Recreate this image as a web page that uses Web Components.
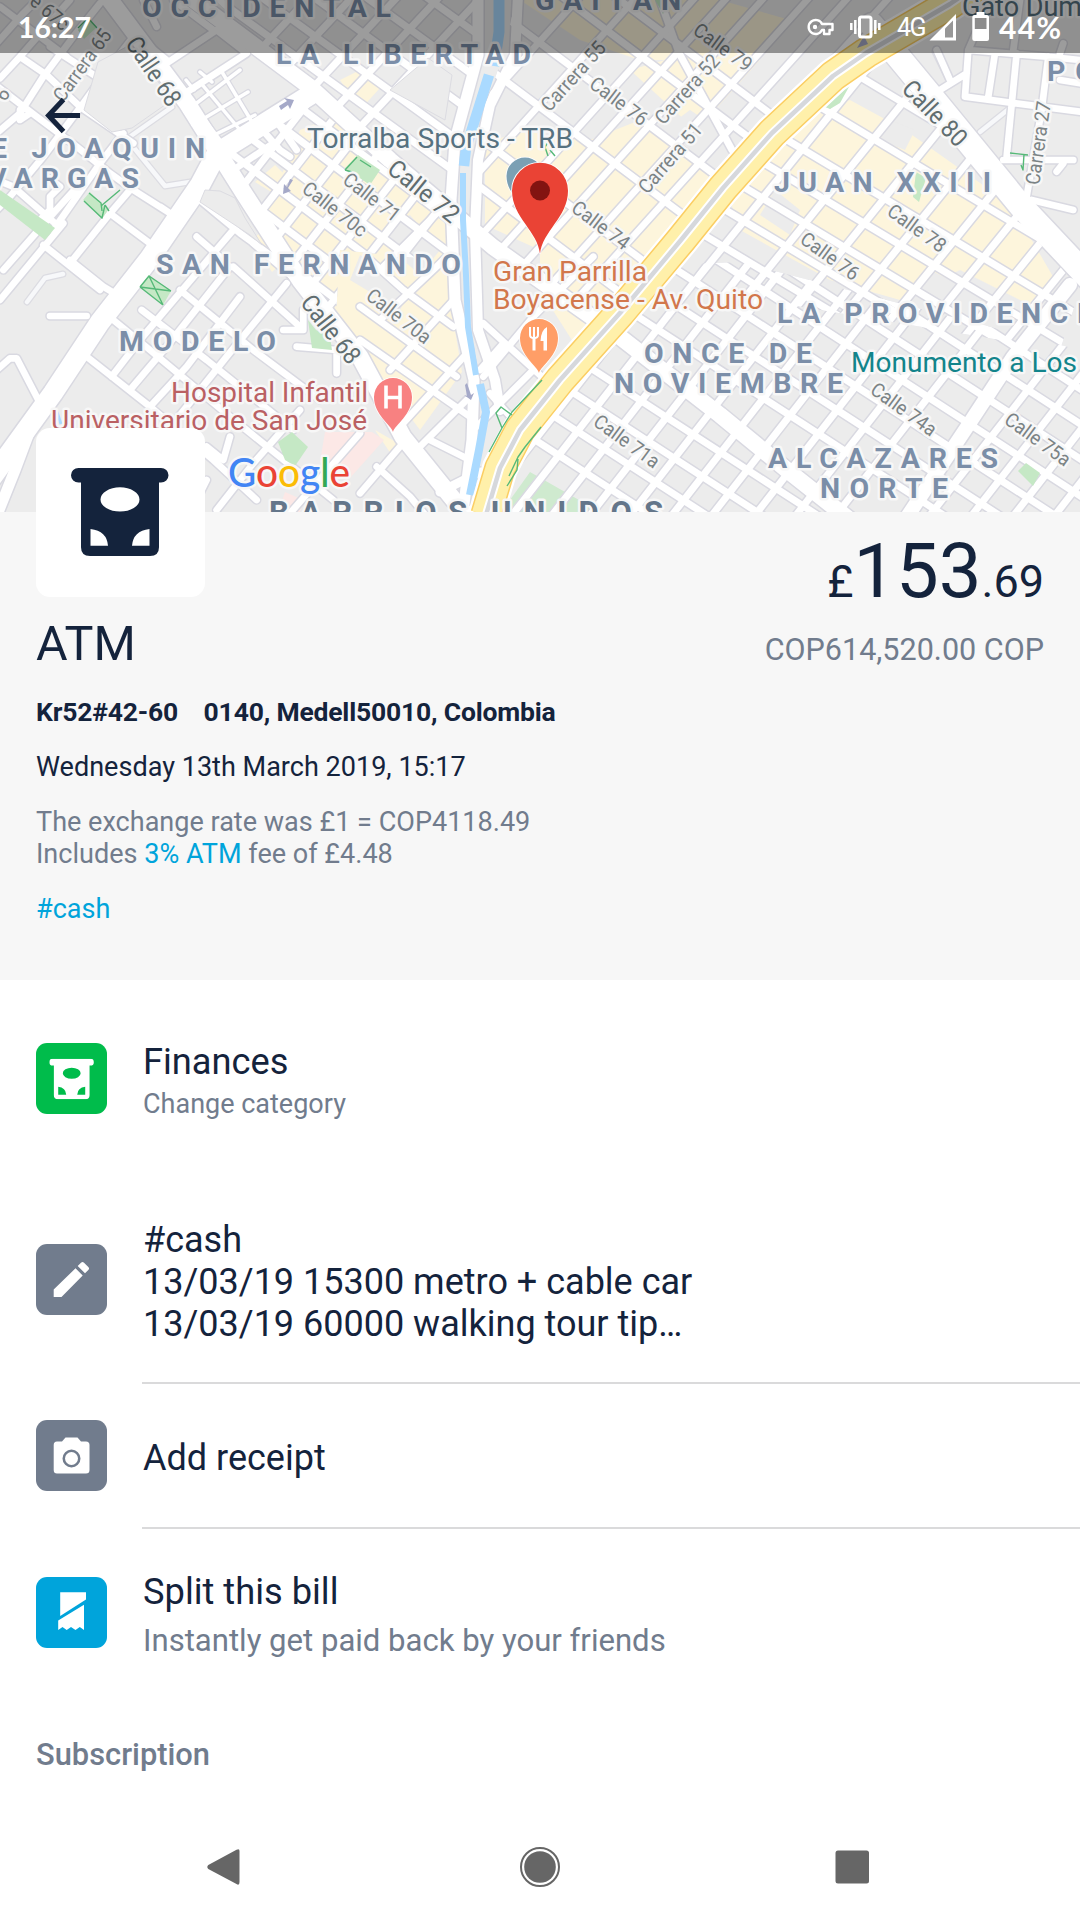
<!DOCTYPE html>
<html lang="en">
<head>
<meta charset="utf-8">
<title>Transaction</title>
<style>
html,body{margin:0;padding:0;background:#fff}
body{width:1080px;height:1920px;overflow:hidden;font-family:Roboto,"Liberation Sans",sans-serif;color:#14233c}
</style>
</head>
<body>
<transaction-screen></transaction-screen>
<script>
const define=(name,html,init)=>customElements.define(name,class extends HTMLElement{
  constructor(){super();this.attachShadow({mode:'open'}).innerHTML=html;}
  connectedCallback(){if(init&&!this.ready){this.ready=true;init(this);}}
});

/* ---------- city map ---------- */
const BLUE='#7b8ea8';
// Each sheet: x origin, y origin, streets traced at three times map scale.
const sheets=[
 [0,0,['M-10,130 L70,40 L110,0','M-10,400 L60,340 L130,230 L220,110 L300,10','M0,235 L60,170 L130,90 L210,0','M-20,640 L30,590 L130,470 L250,310 L330,200 L400,110','M160,690 L300,490 L370,400','M60,170 L140,225 L240,320 L400,430','M-20,250 L110,350 L230,440 L330,520 L400,570 L510,640','M150,140 L320,250','M0,20 L120,110 L200,170','M540,290 L740,160','M500,190 L650,90 L740,160','M-10,540 L40,560 L165,670','M120,660 L150,630 L150,590 L180,560 L140,530','M130,735 L300,870','M10,810 L160,640 L250,540','M210,790 L330,640 L390,570','M330,640 L450,730','M600,600 L720,700 L900,830','M590,710 L670,780','M770,370 L840,450 L870,470','M700,510 L820,430','M820,350 L890,450','M400,100 L500,180','M430,0 L470,80','M640,90 L520,0','M60,330 L60,360 L90,340','M510,640 L480,620','M640,760 L700,690']],
 [0,260,['M0,120 L190,-110','M210,0 L310,80 L360,110','M150,168 L260,168','M260,290 L450,440 L640,600 L770,720','M-10,330 L30,295 L50,295 L120,430','M335,350 L420,240 L640,-20','M390,390 L500,260 L690,20','M450,440 L560,320 L720,110','M520,490 L680,290 L860,70','M340,180 L450,270 L690,470 L1000,720','M425,150 L620,300 L880,510','M540,90 L760,270 L960,420','M850,210 L910,210 L910,150','M890,260 L1010,270 L1010,340','M620,560 L670,600 L690,530','M620,660 L600,700','M650,750 L760,610 L900,450','M870,760 L1080,520','M700,20 L900,200','M760,-50 L900,70']],
 [720,0,['M745,150 L735,290 L1080,335','M810,0 L745,150 L980,170 L1080,180','M825,160 L805,290','M890,160 L860,470','M985,170 L965,330 L920,590','M850,480 L1060,480','M935,600 L1060,630','M660,270 L740,220','M650,150 L690,240','M1020,240 L1080,250','M1010,515 L1030,490','M900,0 L880,150','M1030,130 L1020,160']],
 [360,260,['M30,0 L130,90 L280,200','M0,140 L290,350','M0,240 L330,470','M70,20 L270,-180','M60,180 L230,20 L270,-20','M90,330 L290,110','M120,500 L330,270','M180,560 L320,420','M210,540 L330,600','M50,620 L150,710 L200,770','M0,700 L120,560','M370,190 L545,350','M370,350 L520,170 L700,-10','M360,330 L430,250','M390,400 L460,480','M350,500 L450,400 L530,320']]
];
// A street family: angle, then where each street crosses the line x=at or y=at.
const fam=(a,axis,at,list,w=7)=>[a,w,list.map(v=>axis==='y'?[v,at]:[at,v])];
const grids=[
 ['300,95 395,170 455,225 455,262 340,250 335,329 290,275 250,205 225,155',[fam(37,'x',330,[130,163,198,228,262,295]),fam(-52,'y',200,[232,270,306,342,378,412,446])]],
 ['215,0 478,0 478,60 452,150 450,205 390,160 310,90',[fam(36,'x',400,[-60,-22,22,60,98,132]),fam(-47,'y',80,[232,275,320,362,404])]],
 ['515,0 930,0 860,45 800,95 750,150 675,259 610,330 493,247 478,220 480,120 505,50',[fam(37,'x',593,[-20,20,83,147,223,272]),fam(-48,'y',130,[460,517,576,608,645,690,729,770],6.5)]],
 ['880,55 1020,220 1080,290 1060,350 700,290 690,240 715,205 790,125',[fam(31,'x',887,[93,147,200,237,273,307,345]),fam(-51,'y',200,[650,705,761,824,883,937,987,1030,1075,1120])]],
 ['665,265 740,262 1080,350 1080,512 485,512 505,470 540,420 620,325',[fam(33,'x',720,[155,190,225,262,298,334,370,452,488,524,560]),fam(-52,'y',400,[566,602,642,680,720,762,802,845,886,926,1020,1062,1104,1145])]]
];
const wide=[
 ['M95,-20 L187,103 L245,195 L300,280 L360,357 L403,437 L470,520',17],
 ['M180,-10 L310,87 L390,160 L493,247 L620,337 L720,415 L787,470 L850,520',16],
 ['M310,95 L217,153 L200,185 L150,258 L100,322 L53,393 L-10,480',20],
 ['M30,430 L15,470 L-5,520',11],
 ['M145,275 L190,200',7],
 ['M478,0 L478,55 L455,140 L451,200 L455,300 L474,380 L472,440 L462,520',11],
 ['M518,-5 L515,55 L490,105 L478,160 L475,230 L478,330 L495,380 L500,410',10],
 ['M872,25 L930,95 L1020,205 L1100,290',24],
 ['M1070,285 L1013,357 L967,427 L905,520',14],
 ['M440,492 L480,472',9],
 ['M660,0 L679,53 L732,150',7]
];
const yellow=['300,130 350,110 395,165 450,230 450,300 462,372 420,430 390,390 340,320 290,250 265,215','232,220 240,212 252,228 240,235','250,240 262,232 280,265 272,272','255,182 275,165 290,180 278,196','340,80 360,70 380,88 360,110','520,0 640,0 720,0 790,20 740,70 700,60 640,60 580,40','630,70 700,50 760,60 715,110 690,125','485,145 520,130 590,140 640,120 720,175 660,260 610,320 575,345 540,290 540,250 485,225','820,110 850,100 905,130 990,190 1020,220 1055,280 1030,305 960,270 900,300 830,280 740,230 730,200 790,140','375,430 401,445 395,460'];
const gray=['690,110 720,130 690,150 670,125','525,120 545,105 565,120 550,140','775,190 800,210 790,235 760,215','890,120 915,130 905,150 880,140','360,255 410,290 400,310 350,280','930,270 960,285 940,305 915,285','375,235 410,215 440,250 420,275'];
const green=['M0,190 L55,228 45,240 0,205z','M83,200 L90,192 108,210 102,219z','M140,287 L149,275 171,291 163,305z','M278,442 L292,432 308,447 295,466 285,460z','M345,168 L358,155 380,170 370,185z','M825,107 L850,85 840,103 830,109z','M916,172 L926,178 919,202 913,197z','M1018,471 L1026,463 1040,473 1033,486z','M655,0 L663,14 670,0z','M78,30 L88,18 96,28 84,39z','M308,320 L316,330 330,337 332,350 312,348z'];
const area=[['OCCIDENTAL',142,17,249],['LA LIBERTAD',276,64,255],['GAITAN',535,10,146],['PO',1047,81,48],['E JOAQUIN',-9,158,214],['VARGAS',-12,188,151],['SAN FERNANDO',156,274,305],['MODELO',119,351,157],['JUAN XXIII',774,192,217],['LA PROVIDENCI',777,323,308],['ONCE DE',644,363,168],['NOVIEMBRE',614,393,229],['ALCAZARES',768,468,230],['NORTE',820,498,128]];
const poi=[['Torralba Sports - TRB',307,148,266,'#567180'],['Gran Parrilla',493,281,154,'#d2774c'],['Boyacense - Av. Quito',493,309,270,'#d2774c'],['Hospital Infantil',171,402,197,'#ba6063'],['Universitario de San José',51,429.5,316,'#ba6063'],['Monumento a Los',851,372,226,'#12848b'],['Gato Dum',962,16,120,'#55707e']];
const roads=[['Calle 68',154,71,56,78,25],['Carrera 65',82,65,-54,84,20],['e 67c',50,12,40,44,20],['6',2,94,-55,11,20],['Calle 70c',335,209,38,76,20],['Calle 71',372,197,38,66,20],['Calle 72',424,191,39,84,25],['Calle 70a',399,316,38,76,20],['Calle 68',331,329,52,80,25],['Carrera 55',573,76,-48,86,20],['Calle 76',619,101,37,67,20],['Carrera 52',687,89,-48,86,20],['Carrera 51',670,158,-49,86,20],['Calle 74',601,225,37,67,20],['Calle 79',723,47,36,67,20],['Calle 80',935,113,46,81,25],['Carrera 27',1038,143,-82,84,20],['Calle 78',917,228,36,67,20],['Calle 76',830,256,36,67,20],['Calle 71a',627,441,36,76,20],['Calle 74a',904,409,36,76,20],['Calle 75a',1038,439,36,76,20]];

function mapSvg(){
  const small=(c)=>sheets.map(([x,y,p])=>`<g transform="translate(${x} ${y}) scale(.3333)"><path d="${p.join(' ')}" stroke-width="${c?29:20}"/></g>`).join('');
  const grid=(c)=>grids.map(([,fs],i)=>`<g clip-path="url(#g${i})">`+fs.map(([a,w,pts])=>{
    const r=a*Math.PI/180,dx=Math.cos(r)*700,dy=Math.sin(r)*700;
    return `<path stroke-width="${w+(c?3:0)}" d="${pts.map(([x,y])=>`M${(x-dx).toFixed(1)},${(y-dy).toFixed(1)} L${(x+dx).toFixed(1)},${(y+dy).toFixed(1)}`).join(' ')}"/>`;}).join('')+'</g>').join('');
  const big=(c)=>wide.map(([d,w])=>`<path d="${d}" stroke-width="${w+(c?3:0)}"/>`).join('');
  const hw='M985,-20 L950,4 L866,53 L833,76 L772,133 L723,188 L681,240 L620,313 L560,380 L520,430 L500,468 L486,515';
  const faint='M128,138 L172,107 M126,138 L165,186 L190,182 M27,302 L45,278 63,274 M935,52 L950,82 M980,132 L1010,108';
  const lot='M190,100 L220,140 M200,82 L240,130 M222,72 L252,122 M185,112 L240,70 M193,125 L248,92 M208,138 L255,115 M186,80 L194,90 M200,72 L212,82';
  const pin=(x,y,r,t,f)=>`<path d="M${x},${t} C${x-2},${y+r*1.45} ${x-r},${y+r*.95} ${x-r},${y} A${r},${r} 0 0 1 ${x+r},${y} C${x+r},${y+r*.95} ${x+2},${y+r*1.45} ${x},${t}z" fill="${f}" stroke="#fff" stroke-width="1.6" paint-order="stroke"/>`;
  return `<svg viewBox="0 0 1080 512" width="1080" height="512" fill="none">
<defs>${grids.map(([p],i)=>`<clipPath id="g${i}"><polygon points="${p}"/></clipPath>`).join('')}</defs>
<rect width="1080" height="512" fill="#ececec"/>
<g fill="#fdf5dc">${yellow.map(p=>`<polygon points="${p}"/>`).join('')}</g>
<g fill="#ececec">${gray.map(p=>`<polygon points="${p}"/>`).join('')}</g>
<path fill="#fce8e6" d="M325,432 L372,432 384,440 350,478 320,462z M285,492 L303,500 300,512 278,512z M295,106 L305,104 302,113z"/>
<path fill="#cfeacf" d="M505,507 L530,472 600,512 505,512z"/>
<path stroke="#dcdce2" stroke-width="7" stroke-linecap="round" stroke-linejoin="round" d="${faint}"/>
<path stroke="#f7f8fa" stroke-width="4.500" stroke-linecap="round" stroke-linejoin="round" d="${faint}"/>
<g stroke="#d9d9e1" stroke-linecap="round" stroke-linejoin="round">${small(1)}${grid(1)}${big(1)}<path stroke-width="6" d="${lot}"/></g>
<g stroke="#fff" stroke-linecap="round" stroke-linejoin="round">${small(0)}${grid(0)}${big(0)}<path stroke-width="3.500" d="${lot}"/></g>
<path fill="#ececec" stroke="#dcdce2" d="M205,190 L220,191 235,198 245,218 262,245 250,235 200,202z M390,90 L428,58 452,75 445,120z M98,62 L130,45 172,100 132,128 112,132 84,110z"/>
<g fill="#c5e8c5">${green.map(p=>`<path d="${p}"/>`).join('')}</g>
<path stroke="#aadaff" stroke-width="11" d="M499,-5 V32 L494,66"/><path stroke="#aadaff" stroke-width="10.500" d="M489,75 L477,113 L466,148 L464,166"/><path stroke="#aadaff" stroke-width="6" d="M463,173 V220 L466,275 L468,327 L476,375"/><path stroke="#aadaff" stroke-width="8" d="M480,384 L486,412 L479,450 L470,495"/><path stroke="#aadaff" stroke-width="3" d="M57,412 L61,424"/>
<g stroke-linejoin="round"><path d="${hw}" stroke="#fff" stroke-width="36"/><path d="${hw}" stroke="#fbce63" stroke-width="31.500"/><path d="${hw}" stroke="#fff0aa" stroke-width="28.500"/><path d="${hw}" stroke="#fff" stroke-width="8.500"/><path d="${hw}" stroke="#d6d8dc" stroke-width="4.500"/></g>
<g stroke="#56b978" stroke-width="1.400" stroke-linejoin="round"><path d="M84,201 L102,218 105,205 M89,193 L101,203 102,211 M101,206 L120,190 M105,205 L109,211 M140,287 L149,276 171,291 M140,287 L163,305 M149,276 L163,305 M140,287 L171,291 M345,170 L357,157 M345,170 L352,172 M360,160 L371,167 M542,380 L512,412 502,428 489,452 M502,428 L496,413 501,407 512,415 M541,427 L525,447 518,457 509,476 M518,459 L517,470 507,486 M1010,153 L1028,155 M1024,154 L1023,170 L1021,165 M88,18 L78,28 M88,18 L97,28 M552,136 L545,147 548,156 M550,150 L555,156"/></g>
<g fill="#a5a9c8"><path d="M279,106 L287,101 284,98 294,100 290,109 288,105 281,110z M293,180 L288,188 291,191 283,194 284,184 287,187 290,179z M467,383 L471,395 474,393 471,400 464,395 467,396 465,385z"/><path d="M857,48 L864,36 868,44z"/></g>
${pin(525,176,18.5,206,'#7ba0b4')}
<g font-family="Roboto,sans-serif" paint-order="stroke" stroke="#f7f7f7" stroke-width="5" stroke-linejoin="round">
${roads.map(([t,x,y,a,l,s])=>`<text transform="translate(${x} ${y}) rotate(${a})" text-anchor="middle" y="${s*.355}" textLength="${l}" lengthAdjust="spacingAndGlyphs" font-size="${s}" fill="${s>22?'#606d70':'#7b8385'}">${t}</text>`).join('')}
<g font-size="28.500" font-weight="700" fill="${BLUE}">${area.map(([t,x,y,l])=>`<text x="${x}" y="${y}" textLength="${l}">${t}</text>`).join('')}</g>
<g font-size="31" font-weight="700" fill="#64768a"><text x="269" y="523" textLength="198">BARRIOS</text><text x="491" y="523" textLength="172">UNIDOS</text></g>
<g font-size="28">${poi.map(([t,x,y,l,c])=>`<text x="${x}" y="${y}" textLength="${l}" lengthAdjust="spacingAndGlyphs" fill="${c}">${t}</text>`).join('')}</g>
<text x="228" y="487" textLength="122" lengthAdjust="spacingAndGlyphs" font-size="41" font-family="Lato,sans-serif" font-weight="500"><tspan fill="#4285f4">G</tspan><tspan fill="#ea4335">o</tspan><tspan fill="#fbbc05">o</tspan><tspan fill="#4285f4">g</tspan><tspan fill="#34a853">l</tspan><tspan fill="#ea4335">e</tspan></text></g>
${pin(539,338,19,373,'#ff9e67')}
<path stroke="#fff" stroke-width="2" d="M530,327 V335 Q530,338 534,338 Q538,338 538,335 V327 M534,327 V350"/><path fill="#fff" d="M532.500,337 H535.500 V350.500 H532.500z M547,327 V350.500 H543.500 V341 H540.500 Q541,330 547,327z"/>
${pin(393,397,19,432,'#f88181')}
<path stroke="#fff" stroke-width="3.600" d="M386,385.500 V408.500 M400,385.500 V408.500 M386,397.500 H400"/>
${pin(540,190.700,28,254,'#ea4335')}<circle cx="540" cy="190.500" r="10" fill="#821411"/>
</svg>`;
}
customElements.define('city-map',class extends HTMLElement{
  constructor(){super();this.attachShadow({mode:'open'}).innerHTML=`<style>:host{display:block;width:1080px;height:512px;overflow:hidden}svg{display:block}</style>${mapSvg()}`;}
});

/* ---------- system chrome ---------- */
define('status-bar',`<style>
:host{position:absolute;inset:0 0 auto 0;height:53px;background:rgba(0,0,0,.39);color:#fff;display:flex;justify-content:space-between;align-items:center;box-sizing:border-box;padding:0 18px;font-family:Lato,sans-serif;font-weight:700;font-size:28.500px;line-height:53px}
div{display:flex;align-items:center}svg{display:block}
.t{letter-spacing:-.1px;padding-top:2px}.n{font:400 25px/53px Roboto,sans-serif;margin-left:16px;width:29px;letter-spacing:-1.500px;padding-top:1px}
.p{margin-left:9px;font-size:30px;letter-spacing:1.300px;width:63px;padding-top:2px}
</style><span class="t">16:27</span><div>
<svg width="28" height="53" viewBox="807 0 28 53" fill="none" stroke="#fff" stroke-width="2.400"><path d="M822,24 H832.500 V30 H829.500 V34 H824 V30 H822 A7,7 0 1 1 822,24z" stroke-linejoin="round"/><circle cx="815" cy="27" r="2.200" fill="#fff" stroke="none"/></svg>
<svg style="margin-left:15px" width="31" height="53" viewBox="850 0 31 53" fill="none" stroke="#fff"><rect x="859.500" y="17" width="11.500" height="20" rx="2" stroke-width="3"/><path stroke-width="2.500" d="M851.300,23 V30 M855.300,20 V34 M875.300,20 V34 M879.300,23 V30"/></svg>
<span class="n">4G</span>
<svg style="margin-left:3px" width="27" height="53" viewBox="929 0 27 53"><path d="M929.500,40.500 L956,14 V40.500z" fill="#fff"/><path d="M945,28.500 L953,20.500 V37.500 H945z" fill="#979797"/></svg>
<svg style="margin-left:16px" width="18" height="53" viewBox="972 0 18 53"><path d="M976.500,12 H984.500 V15 H987 Q989,15 989,17 V39 Q989,41 987,41 H974.500 Q972.300,41 972.300,39 V17 Q972.300,15 974.500,15 H976.500z" fill="#fff"/><path d="M974.800,18 H986.500 V29 H974.800z" fill="#8c8c8c"/></svg>
<span class="p">44%</span></div>`);
define('back-arrow',`<style>:host{position:absolute;left:44px;top:96px}svg{display:block}</style><svg width="38" height="39" fill="none" stroke="#14233c" stroke-width="5"><path d="M36,19.500 H5 M19.500,3.500 L4.500,19.500 L19.500,35.500"/></svg>`);
define('nav-bar',`<style>:host{display:flex;justify-content:center;align-items:center;height:108px}svg{display:block}</style>
<svg width="1080" height="108" fill="#666"><path d="M208.300,53 L236.500,37.800 Q239.500,36 239.500,39 V70 Q239.500,74 236.500,72 L208.300,57 Q206.300,55 208.300,53z"/><circle cx="540" cy="55" r="15.800"/><circle cx="540" cy="55" r="19" fill="none" stroke="#666" stroke-width="2"/><rect x="835.500" y="38.500" width="33.500" height="33" rx="2.500"/></svg>`);

/* ---------- icons ---------- */
const note=`<path fill-rule="evenodd" d="M7.500,0 H90 A7.500,7.500 0 0 1 90,15 H88 V82 Q88,91 79,91 H19 Q10,91 10,82 V15 H7.500 A7.500,7.500 0 0 1 7.500,0z M49,20 A19.500,12.500 0 1 0 49,45 A19.500,12.500 0 1 0 49,20z M19.500,63 V80.500 H37 Q36,65 19.500,63z M78.500,63 V80.500 H61 Q62,65 78.500,63z"/>`;
const icons={
 note:`<svg x="13.300" y="15.800" width="44.600" height="40.500" viewBox="0 0 97.500 91" preserveAspectRatio="none">${note}</svg>`,
 pencil:`<path d="M17.700,45.500 L39.500,24.300 L46.700,31.500 L25.500,53 H17.700z M41.700,22 L45,18.800 Q46.500,17.300 48,18.800 L52.300,23 Q53.800,24.500 52.300,26 L49,29.300z"/>`,
 camera:`<path fill-rule="evenodd" d="M29.500,17.500 H41.500 L45,21.500 H50 Q53.500,21.500 53.500,25 V50 Q53.500,53.500 50,53.500 H21 Q17.700,53.500 17.700,50 V25 Q17.700,21.500 21,21.500 H26z M35.500,29.500 A9,9 0 1 0 35.500,47.500 A9,9 0 1 0 35.500,29.500z"/><circle cx="35.500" cy="38.500" r="6.500"/>`,
 split:`<path d="M24.200,15.300 H50 V22.500 L24.200,39z M48,27.800 V53 L43.800,50 L39.500,53 L35,50 L30.700,53 L26.500,50 L22.200,53 V43.500z"/>`
};
define('app-icon',`<style>:host{display:block;flex:none;width:71px;height:71px;border-radius:11px;background:var(--tile,#717c8d)}svg{display:block}</style><span></span>`,
 e=>{e.shadowRoot.querySelector('span').innerHTML=`<svg width="71" height="71" fill="#fff">${icons[e.getAttribute('name')]}</svg>`;});
define('merchant-logo',`<style>:host{display:flex;align-items:center;justify-content:center;box-sizing:border-box;width:169px;height:169px;padding:0 1px 1px 0;border-radius:14px;background:#fff}svg{display:block}</style>
<svg width="97.500" height="88" viewBox="0 0 97.500 91" preserveAspectRatio="none" fill="#14233c">${note}</svg>`);

/* ---------- content ---------- */
define('transaction-summary',`<style>
:host{display:flex;justify-content:space-between;height:468px;background:#f7f7f7;padding:0 36px;box-sizing:border-box;position:relative}
.l{display:flex;flex-direction:column;align-items:flex-start;white-space:pre}
merchant-logo{margin-top:-84px}
h1{font-size:48.500px;line-height:56px;font-weight:400;margin:19px 0 24px}
.a{font-size:26.500px;line-height:32px;font-weight:700;margin-bottom:23px;letter-spacing:-.19px}
.d,.g{font-size:27.050px;line-height:32px;margin-bottom:23px}
.g{color:#717c8d}b{font-weight:400;color:#00a4db}
.r{display:flex;flex-direction:column;align-items:flex-end}
.m{font-size:76px;line-height:80px;margin-top:19px;white-space:nowrap}.m small{font-size:45px;line-height:1}
.c{font-size:30.550px;line-height:36px;color:#717c8d;margin-top:21px}
</style><div class="l"><merchant-logo></merchant-logo><h1><slot name="title"></slot></h1><div class="a"><slot name="address"></slot></div><div class="d"><slot name="date"></slot></div><div class="g">The exchange rate was £1 = COP4118.49
Includes <b>3% ATM</b> fee of £4.48</div><div class="g"><b>#cash</b></div></div>
<div class="r"><div class="m"><small>£</small>153<small>.69</small></div><div class="c"><slot name="local"></slot></div></div>`);
define('action-row',`<style>
:host{display:flex;align-items:center;box-sizing:border-box;padding-left:36px;gap:36px}
.x{display:flex;flex-direction:column;padding-top:var(--drop,3px);gap:var(--gap,5px)}
.t{font-size:var(--main,36px);line-height:var(--lh,42px);white-space:pre}
.s{display:block;font-size:var(--sub,27px);line-height:var(--slh,32px);color:#717c8d}
</style><slot name="icon"></slot><div class="x"><div class="t"><slot></slot></div><slot name="sub" class="s"></slot></div>`);
define('row-divider',`<style>:host{display:block;height:2px;margin-left:142px;background:#dadadb}</style>`);
define('section-title',`<style>:host{display:block;padding:0 36px;font-weight:500;font-size:30.850px;line-height:36px;color:#717c8d}</style><slot></slot>`);
define('transaction-screen',`<style>
:host{display:flex;flex-direction:column;width:1080px;height:1920px;position:relative;overflow:hidden;background:#fff}
city-map{flex:none}transaction-summary{flex:none}
.one,.four{--main:36.250px}
.one{height:197px}.two,.three{--gap:0px;--drop:5px}.two{height:205px}.three{height:143px}.four{height:167px;--lh:44px;--sub:31.100px;--slh:36px;--gap:9px}
section-title{margin-top:41px;flex:1}
</style>
<city-map></city-map><status-bar></status-bar><back-arrow></back-arrow>
<transaction-summary><span slot="title">ATM</span><span slot="address">Kr52#42-60    0140, Medell50010, Colombia</span><span slot="date">Wednesday 13th March 2019, 15:17</span><span slot="local">COP614,520.00 COP</span></transaction-summary>
<action-row class="one"><app-icon slot="icon" name="note" style="--tile:#00bc4b"></app-icon>Finances<span slot="sub">Change category</span></action-row>
<action-row class="two"><app-icon slot="icon" name="pencil"></app-icon>#cash
13/03/19 15300 metro + cable car
13/03/19 60000 walking tour tip…</action-row>
<row-divider></row-divider>
<action-row class="three"><app-icon slot="icon" name="camera"></app-icon>Add receipt</action-row>
<row-divider></row-divider>
<action-row class="four"><app-icon slot="icon" name="split" style="--tile:#00a4db"></app-icon>Split this bill<span slot="sub">Instantly get paid back by your friends</span></action-row>
<section-title>Subscription</section-title>
<nav-bar></nav-bar>`);
</script>
</body>
</html>
